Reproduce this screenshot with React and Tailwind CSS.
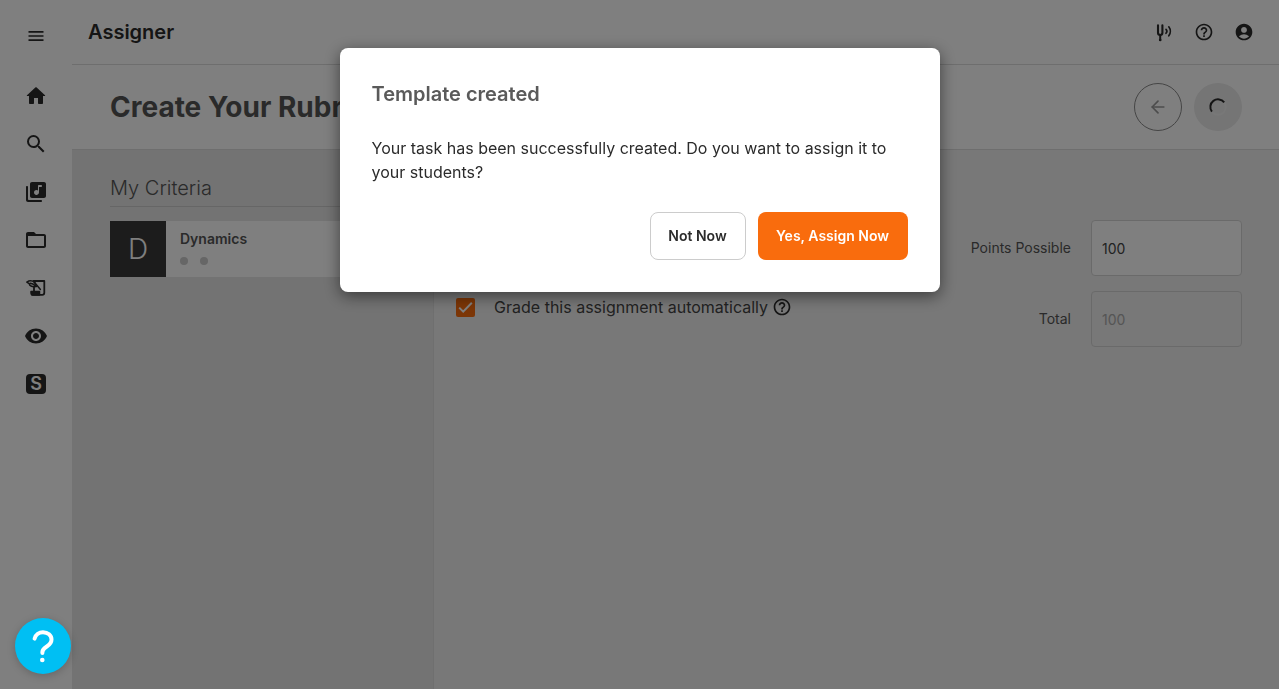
import React from 'react';
import { ArrowLeft } from 'lucide-react';
import {
  MdMenu,
  MdSearch,
  MdFolderOpen,
  MdVisibility,
  MdHelpOutline,
  MdAccountCircle,
} from 'react-icons/md';

const HomeIcon = ({ className }) => (
  <svg className={className} viewBox="0 0 24 24" fill="currentColor">
    <path d="M10 19v-5h4v5c0 .55.45 1 1 1h3c.55 0 1-.45 1-1v-7h1.7c.46 0 .68-.57.33-.87L12.67 3.6c-.38-.34-.96-.34-1.34 0l-8.36 7.53c-.34.3-.13.87.33.87H5v7c0 .55.45 1 1 1h3c.55 0 1-.45 1-1z" />
  </svg>
);

const LibraryIcon = ({ className }) => (
  <svg className={className} viewBox="0 0 24 24" fill="currentColor">
    <path d="M20 2H8c-1.1 0-2 .9-2 2v12c0 1.1.9 2 2 2h12c1.1 0 2-.9 2-2V4c0-1.1-.9-2-2-2zm-3 5h-2v5.37c0 1.27-.9 2.44-2.16 2.6-1.69.23-3.11-1.25-2.8-2.95.2-1.1 1.18-1.95 2.3-2.02.63-.04 1.2.16 1.66.51V6c0-.55.45-1 1-1h2c.55 0 1 .45 1 1s-.45 1-1 1zM3 6c-.55 0-1 .45-1 1v13c0 1.1.9 2 2 2h13c.55 0 1-.45 1-1s-.45-1-1-1H5c-.55 0-1-.45-1-1V7c0-.55-.45-1-1-1z" />
  </svg>
);

const QuillIcon = ({ className }) => (
  <svg className={className} viewBox="0 0 24 24" fill="none" stroke="currentColor" strokeLinecap="round" strokeLinejoin="round">
    <path d="M9.5 5h10.8v11.8a2 2 0 0 1-2 2H8" strokeWidth="1.8" />
    <path d="M2.8 6.1C5 4.6 8.400 4.600 10.600 6.300l1.800 4.300C8.600 11 5.600 10 5.200 7.600z" strokeWidth="1.500" />
    <path d="M6.200 7.200c2 .2 3.600 1 5 2.400M9.800 5.600l6.600 7.900" strokeWidth="1.500" />
    <path d="M10 10.800V15" strokeWidth="1.800" />
    <path d="M7 15.400h8.500v3.500H8.600c-1 0-1.600-.6-1.600-1.600z" fill="currentColor" strokeWidth="1.500" />
  </svg>
);

const TunerIcon = () => (
  <svg className="size-5" viewBox="0 0 20 20" fill="none" stroke="currentColor" strokeLinecap="round">
    <path d="M4 3.2v7.600a2.200 2.200 0 0 0 4.400 0V3.200" strokeWidth="2.100" />
    <path d="M6.200 13.200v4.600" strokeWidth="2" />
    <circle cx="6.200" cy="18" r="0.700" strokeWidth="1.300" />
    <path d="M12 7.300c1 1.100 1 2.900 0 4" strokeWidth="1.700" />
    <path d="M14.800 4.800c2 2.600 2 6.400 0 9" strokeWidth="1.700" />
  </svg>
);

const Spinner = () => (
  <svg className="size-5" viewBox="0 0 20 20" fill="none" strokeWidth="2">
    <circle cx="10" cy="10" r="7.7" stroke="#f0f0f0" />
    <path d="M3.9 14.7A7.7 7.7 0 0 1 16.2 5.4" stroke="#2b2b2b" />
  </svg>
);

const navItems = [
  { label: 'Home', icon: HomeIcon },
  { label: 'Search', icon: MdSearch },
  { label: 'Music library', icon: LibraryIcon },
  { label: 'My files', icon: MdFolderOpen },
  { label: 'Assignments', icon: QuillIcon },
  { label: 'Preview', icon: MdVisibility },
];

const Sidebar = () => (
  <aside className="flex w-18 shrink-0 flex-col items-center bg-white pt-6">
    <button type="button" aria-label="Open menu" className="mb-9 flex size-6 items-center justify-center">
      <MdMenu className="size-5" />
    </button>
    <nav className="flex flex-col gap-6">
      {navItems.map(({ label, icon: Icon }) => (
        <a key={label} href="#" aria-label={label} className="size-6">
          <Icon className="size-6" />
        </a>
      ))}
      <a href="#" aria-label="SoundCheck" className="flex size-6 items-center justify-center">
        <span className="flex size-5 items-center justify-center rounded-sm bg-[#2b2b2b] text-lg font-semibold leading-5 text-white">
          S
        </span>
      </a>
    </nav>
  </aside>
);

const TopBar = () => (
  <header className="flex h-[65px] items-center justify-between border-b border-[#dcdcdc] bg-white pl-4 pr-[25px]">
    <span className="text-xl font-semibold">Assigner</span>
    <div className="flex gap-5">
      <button type="button" aria-label="Tuner"><TunerIcon /></button>
      <button type="button" aria-label="Help"><MdHelpOutline className="size-5" /></button>
      <button type="button" aria-label="Account"><MdAccountCircle className="size-5" /></button>
    </div>
  </header>
);

const PageHeader = () => (
  <div className="flex h-[85px] items-center justify-between border-b border-[#dcdcdc] bg-white pl-[38px] pr-[37px]">
    <h1 className="text-[28px] font-bold text-[#555555]">Create Your Rubric</h1>
    <div className="flex gap-3">
      <button
        type="button"
        aria-label="Back"
        className="flex size-12 items-center justify-center rounded-full border border-[#8a8a8a] text-[#999999]"
      >
        <ArrowLeft className="size-5" />
      </button>
      <button
        type="button"
        aria-label="Saving"
        disabled
        className="flex size-12 items-center justify-center rounded-full bg-[#eaeaea]"
      >
        <Spinner />
      </button>
    </div>
  </div>
);

const Criteria = () => (
  <section className="w-[30%] shrink-0 border-r border-[#dedede] bg-[#e6e6e6] pl-[38px] pt-6">
    <h2 className="border-b border-[#cccccc] pb-1 text-xl font-light text-[#555555]">My Criteria</h2>
    <div className="mt-3.5 flex h-14 bg-white">
      <div className="flex size-14 items-center justify-center bg-[#383838] text-[28px] font-light text-white">D</div>
      <div className="pl-3.5 pt-2">
        <p className="text-sm font-semibold text-[#555555]">Dynamics</p>
        <div className="mt-2 flex gap-3">
          <span className="size-2 rounded-full bg-[#cccccc]" />
          <span className="size-2 rounded-full bg-[#cccccc]" />
        </div>
      </div>
    </div>
  </section>
);

const Settings = () => (
  <section className="flex flex-1 items-start justify-between bg-[#f0f0f0] pl-[22px] pr-[37px] pt-[70px]">
    <div className="mt-[75px] flex items-center">
      <span className="relative flex size-[19px]">
        <input
          id="auto-grade"
          type="checkbox"
          defaultChecked
          className="size-[19px] appearance-none rounded-xs checked:bg-[#f96c0d]"
        />
        <svg
          className="pointer-events-none absolute inset-0"
          viewBox="0 0 19 19"
          fill="none"
          stroke="white"
          strokeWidth="2"
        >
          <path d="M3.2 9.6l4 4 8.6-8.8" />
        </svg>
      </span>
      <label htmlFor="auto-grade" className="ml-[19px] text-base leading-6 text-[#444444]">
        Grade this assignment automatically
      </label>
      <button type="button" aria-label="About automatic grading" className="ml-1">
        <MdHelpOutline className="size-5" />
      </button>
    </div>
    <div className="flex flex-col gap-[15px] text-sm text-[#555555]">
      <div className="flex items-center justify-end gap-5">
        <label htmlFor="points">Points Possible</label>
        <input
          id="points"
          type="text"
          defaultValue="100"
          className="h-14 w-[151px] rounded-sm border border-[#d5d5d5] bg-white px-2.5 text-[#444444]"
        />
      </div>
      <div className="flex items-center justify-end gap-5">
        <label htmlFor="total">Total</label>
        <input
          id="total"
          type="text"
          defaultValue="100"
          disabled
          className="h-14 w-[151px] rounded-sm border border-[#d5d5d5] px-2.5 text-[#aaaaaa]"
        />
      </div>
    </div>
  </section>
);

const TemplateDialog = () => (
  <div className="fixed inset-0 z-10 flex items-start justify-center bg-black/50 pt-12">
    <div
      role="dialog"
      aria-modal="true"
      aria-labelledby="dialog-title"
      className="w-full max-w-[600px] rounded-lg bg-white p-8 shadow-[0_4px_16px_rgba(0,0,0,0.5)]"
    >
      <h2 id="dialog-title" className="text-xl font-semibold text-[#5a5a5a]">Template created</h2>
      <p className="mt-7 text-base text-[#2b2b2b]">
        Your task has been successfully created. Do you want to assign it to your students?
      </p>
      <div className="mt-7 flex justify-end gap-3 text-sm font-semibold">
        <button type="button" className="h-12 w-24 rounded-lg border border-[#cccccc] text-[#2b2b2b]">
          Not Now
        </button>
        <button type="button" className="h-12 w-[150px] rounded-lg bg-[#f96c0d] text-white">
          Yes, Assign Now
        </button>
      </div>
    </div>
  </div>
);

const HelpBeacon = () => (
  <button
    type="button"
    aria-label="Open help"
    className="fixed bottom-[15px] left-[15px] z-20 flex size-14 items-center justify-center rounded-full bg-[#00bff3] text-white shadow-[0_2px_8px_rgba(0,0,0,0.2)]"
  >
    <svg className="size-9" viewBox="0 0 36 36" fill="none" stroke="currentColor" strokeWidth="4" strokeLinecap="round">
      <path d="M9.6 10.6C10.6 6.4 14.2 4.2 18 4.2c4.8 0 8.5 3 8.5 7.3 0 3.4-2 5.3-4.7 7-2.6 1.6-4.4 2.700-4.4 5.500v1" />
      <circle cx="17.3" cy="32" r="2.3" fill="currentColor" stroke="none" />
    </svg>
  </button>
);

const App = () => (
  <div className="flex min-h-screen bg-white font-['Inter',sans-serif] text-[#2b2b2b]">
    <Sidebar />
    <div className="flex flex-1 flex-col">
      <TopBar />
      <PageHeader />
      <main className="flex flex-1">
        <Criteria />
        <Settings />
      </main>
    </div>
    <TemplateDialog />
    <HelpBeacon />
  </div>
);

export default App;
